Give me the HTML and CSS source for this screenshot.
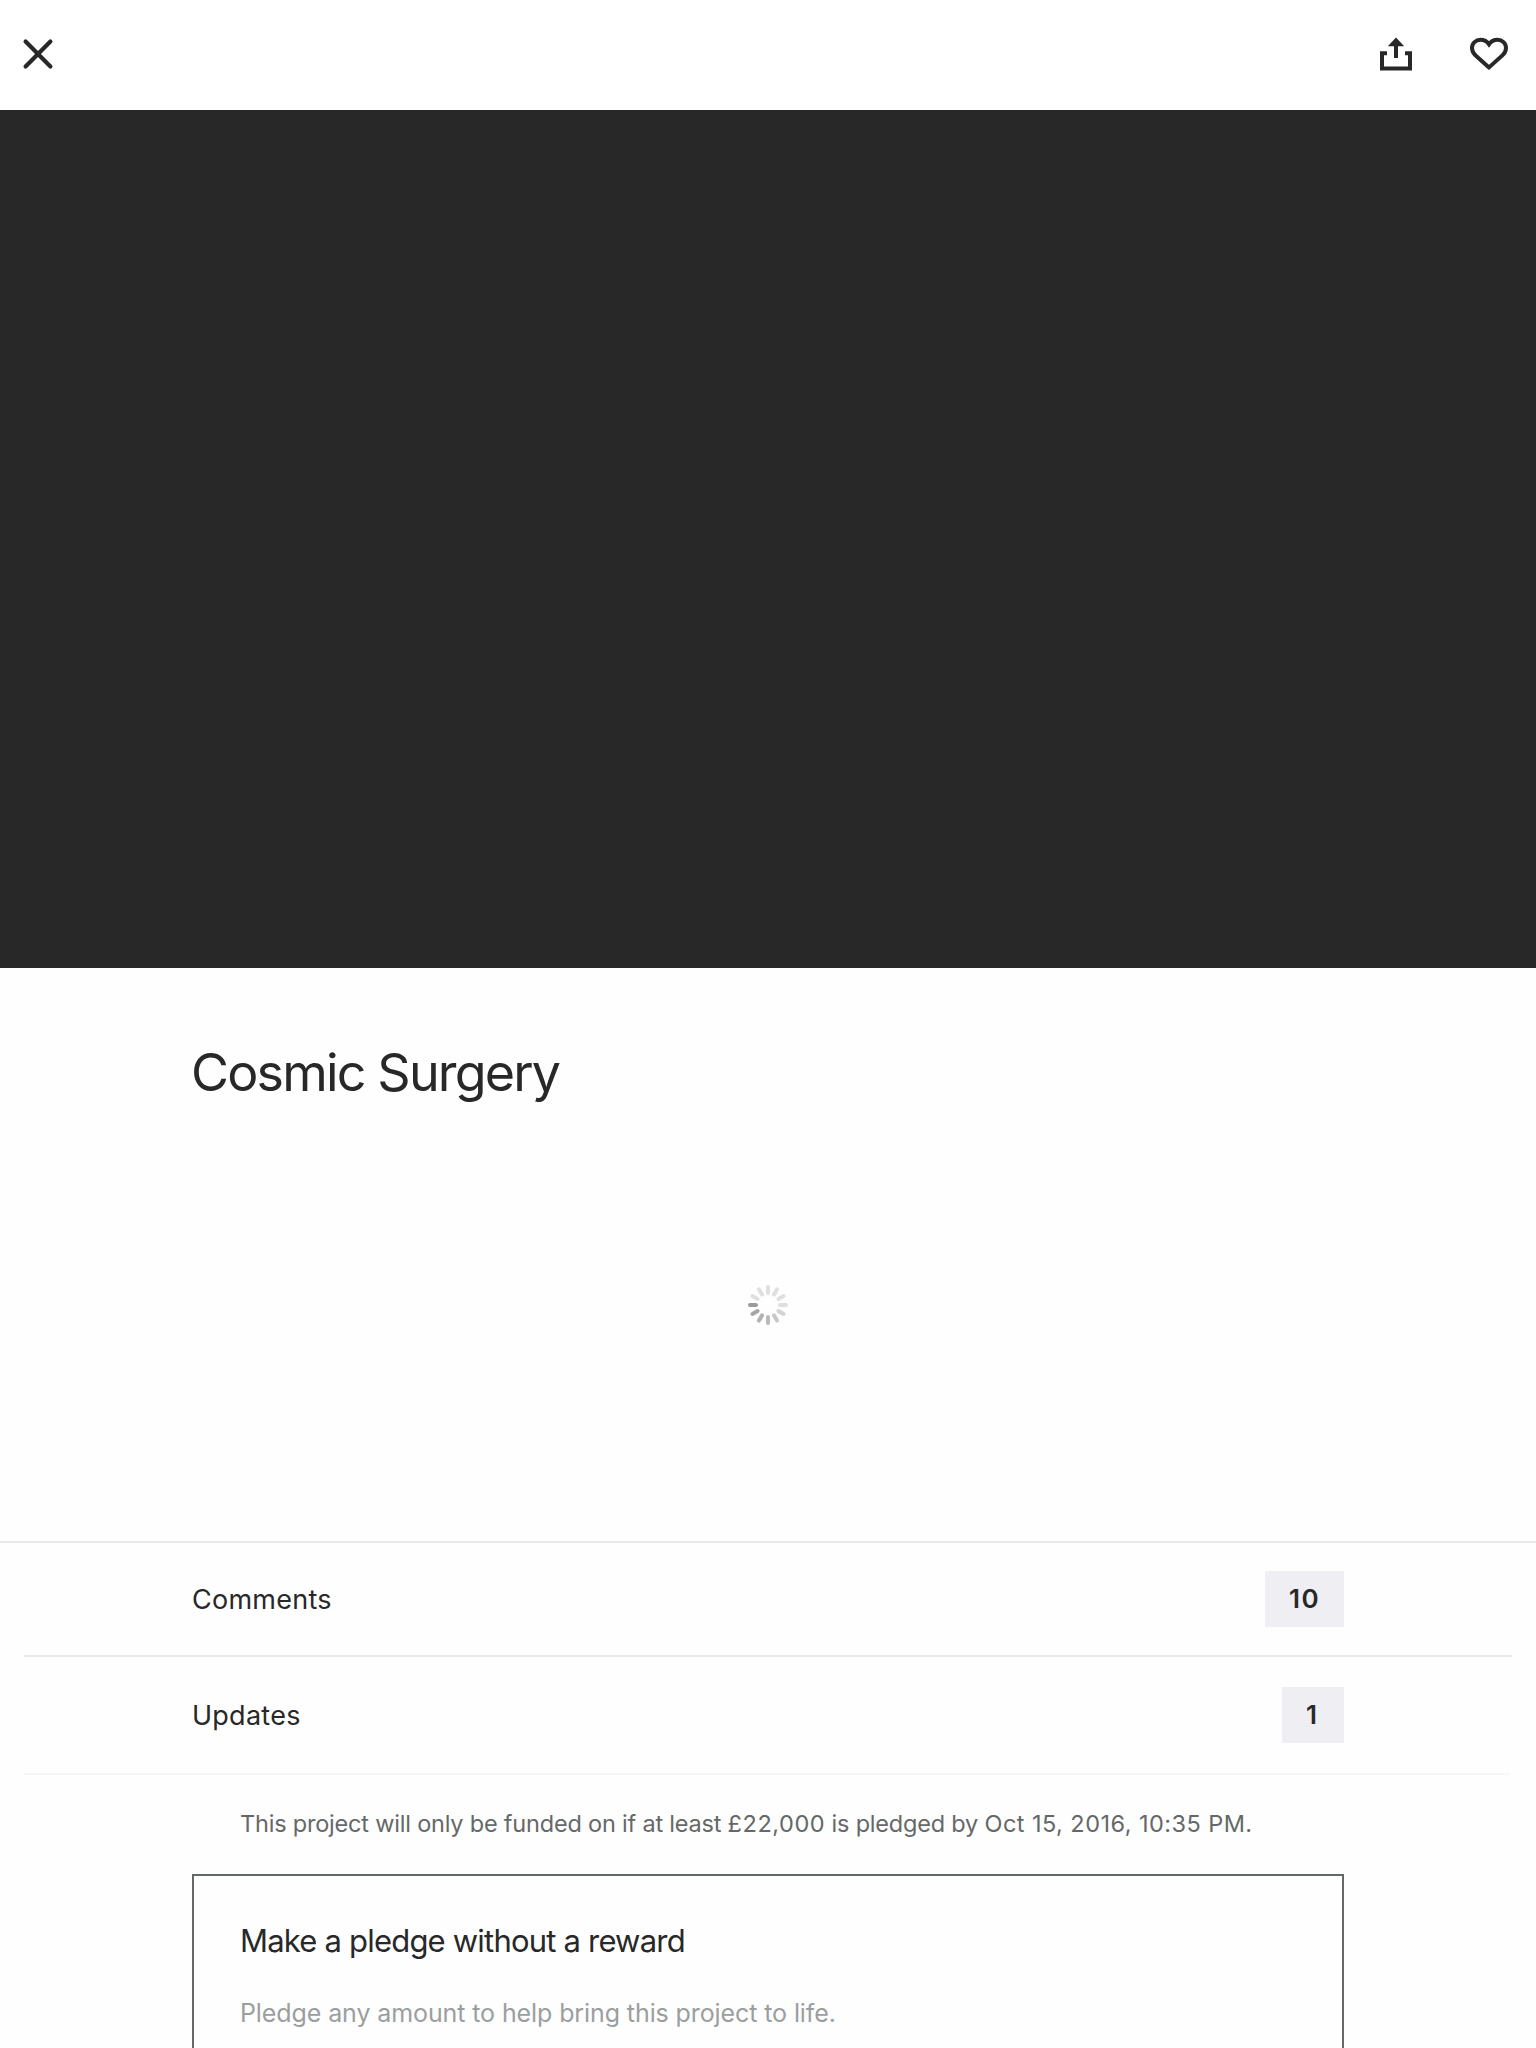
FILE: index.html
```html
<!DOCTYPE html>
<html lang="en">
<head>
<meta charset="utf-8">
<title>Cosmic Surgery</title>
<link rel="stylesheet" href="styles.css">
</head>
<body>
<header class="topbar">
  <svg class="icon-close" width="36" height="36" viewBox="20 36 36 36"><path d="M25.6 41.6 50.4 66.4M50.4 41.6 25.6 66.4"/></svg>
  <div class="actions">
    <svg class="icon-share" width="40" height="40" viewBox="1376 34 40 40"><path class="outline" d="M1387 53.3H1382V68.5H1410V53.3H1405"/><path class="arrow" d="M1396 37.4 1404.2 46.2H1398V58H1394V46.2H1387.8Z"/></svg>
    <svg class="icon-heart" width="44" height="40" viewBox="1467 34 44 40"><path d="M1489 67.4 1475.6 55.4C1473.2 53.2 1472 50.8 1472 48C1472 43.2 1475.8 39.8 1480.4 39.8C1484 39.8 1487 41.4 1489 44.3C1491 41.4 1494 39.8 1497.6 39.8C1502.2 39.8 1506 43.2 1506 48C1506 50.8 1504.8 53.2 1502.4 55.4Z"/></svg>
  </div>
</header>
<div class="hero"></div>
<main>
  <section class="intro">
    <h1 class="title">Cosmic Surgery</h1>
    <svg class="spinner" width="40" height="40" viewBox="-20 -20 40 40">
      <g stroke="#e0e0e0"><path d="M0-12V-18"/><path d="M0-12V-18" transform="rotate(30)"/><path d="M0-12V-18" transform="rotate(60)"/><path d="M0-12V-18" transform="rotate(300)"/><path d="M0-12V-18" transform="rotate(330)"/></g>
      <path stroke="#dedede" d="M0-12V-18" transform="rotate(90)"/>
      <path stroke="#d3d3d3" d="M0-12V-18" transform="rotate(120)"/>
      <path stroke="#c8c8c8" d="M0-12V-18" transform="rotate(150)"/>
      <path stroke="#bababa" d="M0-12V-18" transform="rotate(180)"/>
      <path stroke="#b1b1b1" d="M0-12V-18" transform="rotate(210)"/>
      <path stroke="#a6a6a6" d="M0-12V-18" transform="rotate(240)"/>
      <path stroke="#9b9b9b" d="M0-12V-18" transform="rotate(270)"/>
    </svg>
  </section>
  <nav class="links">
    <a class="row"><span class="label">Comments</span><span class="badge">10</span></a>
    <a class="row last"><span class="label">Updates</span><span class="badge single">1</span></a>
  </nav>
  <p class="deadline">This project will only be funded on if at least <span class="goal">£22,000</span> is pledged by <span class="date">Oct 15, 2016, 10:35 PM.</span></p>
  <section class="pledge">
    <h2 class="pledge-title">Make a pledge without a reward</h2>
    <p class="pledge-text">Pledge any amount to help bring this project to life.</p>
  </section>
</main>
</body>
</html>
```
FILE: styles.css
```css
* { box-sizing: border-box; }
body { margin: 0; background: #fefefe; color: #282828; font-family: Inter, "Liberation Sans", sans-serif; height: 2048px; overflow: hidden; }
h1, h2, p { margin: 0; font-weight: 400; white-space: nowrap; }
svg { display: block; flex: none; }
.topbar { height: 110px; padding: 0 25px 2px 20px; display: flex; align-items: center; justify-content: space-between; background: #fff; }
.actions { display: flex; gap: 51px; }
.icon-close path, .icon-heart path, .outline { fill: none; stroke: #282828; stroke-width: 4; }
.icon-close path { stroke-width: 4.2; stroke-linecap: round; }
.arrow { fill: #282828; }
.hero { height: 858px; background: #282828; }
.intro { height: 573px; padding: 72px 192px 0 191px; display: flex; flex-direction: column; background: #fefefe; }
.title { font-size: 52px; line-height: 65px; letter-spacing: -1.82px; }
.spinner { align-self: center; margin: 180px 0 0 1px; fill: none; stroke-width: 4; stroke-linecap: round; }
.links { border-top: 2px solid #e8e8e8; }
.row { height: 114px; margin: 0 24px; padding: 0 168px; display: flex; align-items: center; justify-content: space-between; border-bottom: 2px solid #e8e8e8; }
.row.last { height: 118px; margin-right: 26px; padding-right: 166px; border-color: #f7f7f7; }
.label { padding-top: 2px; font-size: 27px; line-height: 34px; letter-spacing: 0.25px; }
.badge { height: 56px; padding: 0 24px; background: #efeef3; font-size: 26px; font-weight: 600; line-height: 56px; letter-spacing: 1.42px; }
.badge.single { letter-spacing: 3px; }
.deadline { margin: 32px 0 0 240px; font-size: 23.5px; line-height: 34px; letter-spacing: -0.2px; color: #656868; }
.goal { letter-spacing: 0.55px; }
.date { letter-spacing: 0.45px; }
.pledge { height: 220px; margin: 33px 192px 0; padding: 45px 46px 0; border: 2px solid #656868; }
.pledge-title { font-size: 31px; line-height: 40px; letter-spacing: -0.8px; }
.pledge-text { margin-top: 35px; font-size: 25px; line-height: 34px; letter-spacing: -0.1px; color: #9b9e9e; }
```
